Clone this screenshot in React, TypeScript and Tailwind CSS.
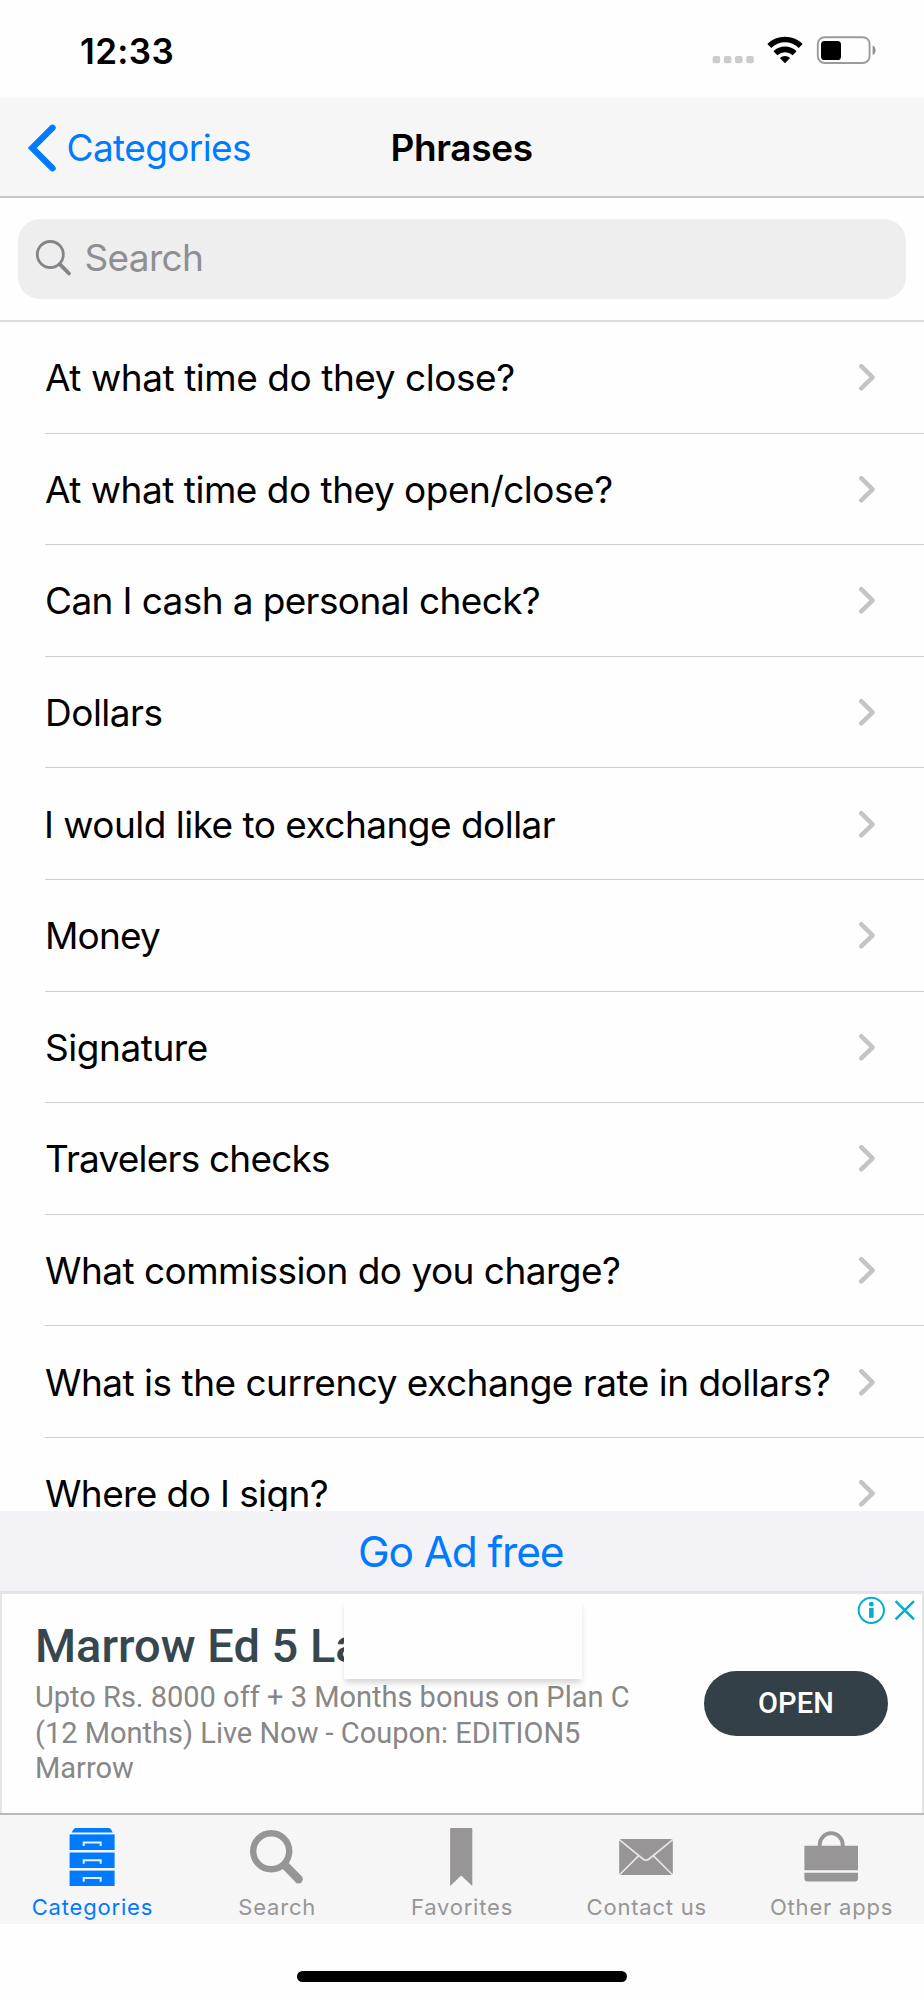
import type { ReactNode } from 'react'
import { clsx } from 'clsx'

type Phrase = { text: string; className: string }

const phrases: Phrase[] = [
  { text: 'At what time do they close?', className: 'ml-[45px] tracking-[-0.45px]' },
  { text: 'At what time do they open/close?', className: 'ml-[45px] tracking-[-0.495px]' },
  { text: 'Can I cash a personal check?', className: 'ml-[45px] tracking-[-0.62px]' },
  { text: 'Dollars', className: 'ml-[45px] tracking-[-0.5px]' },
  { text: 'I would like to exchange dollar', className: 'ml-[44px] tracking-[-0.53px]' },
  { text: 'Money', className: 'ml-[45px] tracking-[-0.8px]' },
  { text: 'Signature', className: 'ml-[45px] tracking-[-0.45px]' },
  { text: 'Travelers checks', className: 'ml-[45px] tracking-[-0.8px]' },
  { text: 'What commission do you charge?', className: 'ml-[45px] tracking-[-0.53px]' },
  { text: 'What is the currency exchange rate in dollars?', className: 'ml-[45px] tracking-[-0.5px]' },
  { text: 'Where do I sign?', className: 'ml-[45px] tracking-[-0.6px]' },
]

function StatusBar() {
  return (
    <div className="flex h-[98px] shrink-0 items-center pt-[3px] pl-[80px] pr-[48px]">
      <span className="text-[35px] leading-[42px] font-semibold tracking-[0.35px]">12:33</span>
      <svg className="-mt-[1px] ml-auto" width="164" height="30" viewBox="712 35 164 30" aria-hidden="true">
        <g fill="#cbcbcb">
          <rect x="712.6" y="56" width="7.6" height="7.3" rx="2" />
          <rect x="723.8" y="56" width="7.6" height="7.3" rx="2" />
          <rect x="735" y="56" width="7.6" height="7.3" rx="2" />
          <rect x="746.2" y="56" width="7.6" height="7.3" rx="2" />
        </g>
        <g fill="none" stroke="#000" strokeWidth="5.6">
          <path d="M769.3 45.9a22.6 22.6 0 0 1 31.4 0" />
          <path d="M775.4 53.2a13.9 13.9 0 0 1 19.2 0" />
        </g>
        <path d="M785 63.2l-5.1-5.3a7.6 7.6 0 0 1 10.2 0z" fill="#000" />
        <rect x="817.8" y="37.2" width="51.8" height="25.8" rx="6.8" fill="none" stroke="#9b9b9b" strokeWidth="1.9" />
        <rect x="821" y="41" width="20" height="19" rx="3.6" fill="#000" />
        <path d="M872.6 45.6c3.9 1.3 3.9 8.2 0 9.5z" fill="#8e8e8e" />
      </svg>
    </div>
  )
}

function NavBar() {
  return (
    <div className="relative flex h-[100px] shrink-0 items-center border-b-[2px] border-[#c5c5c6] bg-[#f6f6f6]">
      <svg className="ml-[28px] mt-[2px] shrink-0" width="29" height="48" viewBox="0 0 29 48" fill="none" aria-hidden="true">
        <path d="M24.500 3.800L4.200 24L24.500 44.200" stroke="#007aff" strokeWidth="6.400" strokeLinecap="round" />
      </svg>
      <span className="mt-[1px] ml-[9.5px] text-[37px] leading-[44px] tracking-[-0.615px] text-[#007aff]">Categories</span>
      <span className="mt-[1px] ml-[139.5px] text-[37px] leading-[44px] font-semibold tracking-[-0.319px]">Phrases</span>
    </div>
  )
}

function SearchField() {
  return (
    <div className="h-[124px] shrink-0 border-b-[2px] border-[#dcdcdd] px-[18px] pt-[21px]">
      <div className="flex h-[80px] items-center rounded-[22px] bg-[#eeeeef]">
        <svg className="ml-[16px] shrink-0" width="38" height="38" viewBox="0 0 38 38" fill="none" stroke="#848489" aria-hidden="true">
          <circle cx="16.3" cy="14.5" r="13" strokeWidth="2.8" />
          <path d="M26 24.4L35 33.5" strokeWidth="3.8" strokeLinecap="round" />
        </svg>
        <span className="-mt-[3px] ml-[12.5px] text-[37px] leading-[44px] tracking-[-0.68px] text-[#8e8e93]">Search</span>
      </div>
    </div>
  )
}

function PhraseRow({ text, className }: Phrase) {
  return (
    <li className="h-[111.6px]">
      <div className="flex h-[110.6px] items-center">
        <span className={clsx('mt-[2px] text-[37px] leading-[44px] whitespace-nowrap', className)}>{text}</span>
        <svg className="mr-[47px] ml-auto shrink-0" width="19" height="30" viewBox="0 0 19 30" fill="none" aria-hidden="true">
          <path d="M3.200 4.200L14.600 15.300L3.200 26.400" stroke="#c4c4c7" strokeWidth="4.500" strokeLinecap="round" strokeLinejoin="round" />
        </svg>
      </div>
      <div className="ml-[45px] h-[1px] bg-[#cfcfd1]" />
    </li>
  )
}

function AdBanner() {
  return (
    <div className="relative flex h-[222px] shrink-0 border-[2px] border-t-[3px] border-b-0 border-[#e5e5e7] bg-[#fefefe] pl-[33px] font-[Roboto,sans-serif]">
      <div className="w-[639.5px] pt-[24px]">
        <div className="text-[47px] leading-[56px] font-medium whitespace-nowrap text-[#37474f]">Marrow Ed 5 La</div>
        <div className="mt-[6px] text-[29px] leading-[35.7px] whitespace-nowrap text-[#878787]">
          Upto Rs. 8000 off + 3 Months bonus on Plan C
          <br />
          (12 Months) Live Now - Coupon: EDITION5
          <br />
          Marrow
        </div>
      </div>
      <button className="mt-[77px] ml-[29.5px] h-[65px] w-[184px] rounded-full bg-[#334047] pb-px text-[29px] leading-[34px] font-medium tracking-[0.2px] text-white">
        OPEN
      </button>
      <div className="absolute top-[6px] left-[342px] h-[79px] w-[238px] bg-[#fefefe] shadow-[0_5px_6px_-1px_rgba(0,0,0,0.16)]" />
      <svg className="absolute top-[2px] right-[6px]" width="60" height="30" viewBox="0 0 60 30" fill="none" stroke="#00aecd" aria-hidden="true">
        <circle cx="15.3" cy="14.3" r="12.6" strokeWidth="2" />
        <circle cx="15.3" cy="8.2" r="2.4" fill="#00aecd" stroke="none" />
        <rect x="13.1" y="12" width="4.5" height="9.8" fill="#00aecd" stroke="none" />
        <path d="M39.6 5.2L58 23.4M58 5.2L39.6 23.4" strokeWidth="2.5" />
      </svg>
    </div>
  )
}

function Tab({ label, className, children }: { label: string; className?: string; children: ReactNode }) {
  return (
    <div className={clsx('flex flex-col items-center pt-[13px]', className ?? 'text-[#979596]')}>
      <svg width="56" height="60" viewBox="0 0 56 60" aria-hidden="true">
        {children}
      </svg>
      <span className="mt-[6px] text-[22px] leading-[26px] tracking-[0.8px] whitespace-nowrap">{label}</span>
    </div>
  )
}

function TabBar() {
  return (
    <div className="grid h-[111px] shrink-0 grid-cols-5 border-t-[2px] border-[#b9b9ba] bg-[#f6f6f6]">
      <Tab label="Categories" className="text-[#007aff]">
        <g fill="currentColor">
          <path d="M12 0h32.500c2 0 3 2 4.200 4.500H7.700C9 2 10 0 12 0z" />
          <rect x="5.600" y="6.400" width="45" height="15.600" />
          <rect x="5.600" y="24.500" width="45" height="15.500" />
          <rect x="5.600" y="42.600" width="45" height="15.400" />
        </g>
        <path
          d="M19.700 18v-3.600h17V18M19.700 35.800v-3.600h17v3.600M19.700 53.700v-3.600h17v3.600"
          fill="none"
          stroke="#e8f1fd"
          strokeWidth="2"
        />
      </Tab>
      <Tab label="Search">
        <g fill="none" stroke="currentColor">
          <circle cx="22.200" cy="23.200" r="18" strokeWidth="6.400" />
          <path d="M36 37.300L49.700 51.300" strokeWidth="8.400" />
          <path d="M49.500 51.200h.1" strokeWidth="8.400" strokeLinecap="round" />
        </g>
      </Tab>
      <Tab label="Favorites">
        <path d="M16.800 0H37.600l.7.700V58L27.200 47.500L16.100 58V.7z" fill="currentColor" />
      </Tab>
      <Tab label="Contact us">
        <g transform="translate(-1 0)">
          <rect x="1.200" y="11" width="53.600" height="36" rx="2" fill="currentColor" />
          <path
            d="M1.500 11.800L25 31q3 2.500 6 0L54.500 11.800M1.800 46.500L20.500 27.800M54.200 46.500L35.500 27.800"
            fill="none"
            stroke="#e6e6e6"
            strokeWidth="1.700"
          />
        </g>
      </Tab>
      <Tab label="Other apps">
        <g transform="translate(-0.800 0)">
          <path d="M16.500 19v-2.300a11.500 11.500 0 0 1 23 0V19" fill="none" stroke="currentColor" strokeWidth="3.800" />
          <path d="M1.200 17.800h53.600v24.500H1.200zM1.200 44.700h53.600v5.500q0 3.300-3.300 3.300h-47q-3.300 0-3.300-3.300z" fill="currentColor" />
        </g>
      </Tab>
    </div>
  )
}

export default function App() {
  return (
    <div className="flex h-[2000px] w-[924px] flex-col overflow-hidden bg-[#fefefe] font-[Inter,sans-serif] text-black">
      <StatusBar />
      <NavBar />
      <SearchField />
      <ul className="h-[1189px] shrink-0 overflow-hidden">
        {phrases.map((phrase) => (
          <PhraseRow key={phrase.text} {...phrase} />
        ))}
      </ul>
      <div className="flex h-[80px] shrink-0 items-center bg-[#f2f2f7] pl-[358px]">
        <span className="mt-px text-[42.5px] leading-[52px] tracking-[-1.165px] whitespace-nowrap text-[#007aff]">Go Ad free</span>
      </div>
      <AdBanner />
      <TabBar />
      <div className="flex justify-center pt-[47px]">
        <div className="h-[11px] w-[330px] rounded-full bg-black" />
      </div>
    </div>
  )
}
